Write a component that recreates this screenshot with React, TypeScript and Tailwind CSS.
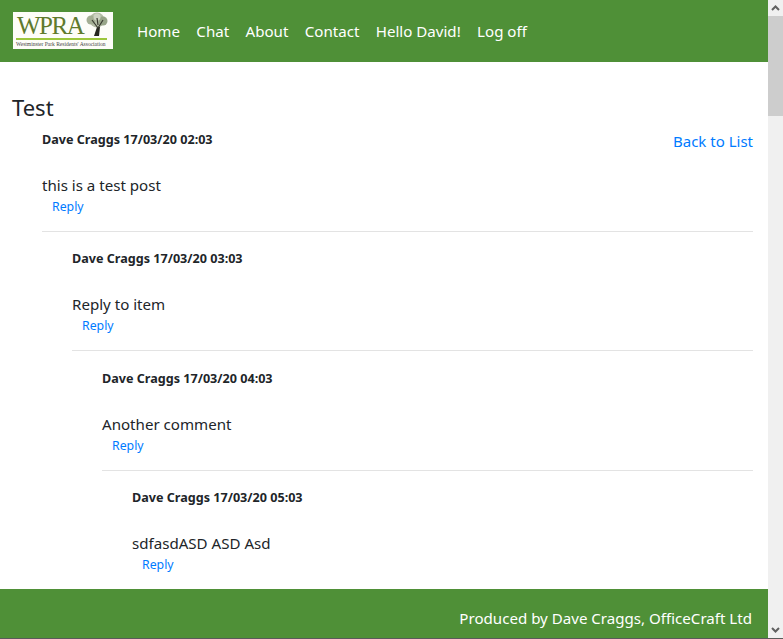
import React from 'react';

const comments = [
  { time: '02:03', text: 'this is a test post', indent: 'ml-[30px]' },
  { time: '03:03', text: 'Reply to item', indent: 'ml-[60px]' },
  { time: '04:03', text: 'Another comment', indent: 'ml-[90px]' },
  { time: '05:03', text: 'sdfasdASD ASD Asd', indent: 'ml-[120px]' },
];

function Logo() {
  return (
    <div className="relative w-[100px] h-[37px] mb-[1px] bg-[#fdfdf8] overflow-hidden">
      <span className="absolute left-[4px] top-[0px] text-[25px] leading-[27px] text-[#5f7a2c] font-['Liberation_Serif',serif] tracking-[-1.5px]">
        WPRA
      </span>
      <svg className="absolute left-[72px] top-[0px]" width="24" height="25" viewBox="0 0 24 25">
        <circle cx="12" cy="8" r="7.5" fill="#b4bda6" />
        <circle cx="6" cy="8" r="4.5" fill="#a3ae93" />
        <circle cx="18" cy="9" r="4.5" fill="#98a588" />
        <circle cx="12" cy="5" r="3.5" fill="#cdd3c2" />
        <path d="M9 24 L12 15 L15 15 L14 24 Z" fill="#26271f" />
        <path d="M13 16 L7 8 M13 16 L18 8 M13 13 L12 6" stroke="#3a3b30" strokeWidth="1.2" fill="none" />
      </svg>
      <div className="absolute left-[3px] right-[6px] top-[26px] h-[2px] bg-[#9cc63c]" />
      <span className="absolute left-[3px] top-[29px] text-[5.5px] leading-[6px] text-[#444] whitespace-nowrap font-['Liberation_Serif',serif]">
        Westminster Park Residents' Association
      </span>
    </div>
  );
}

function Comment({ time, text, indent, last }: { time: string; text: string; indent: string; last: boolean }) {
  return (
    <div className={indent}>
      <div className="text-[12.6px] leading-[18px] font-bold text-[#212529] h-[18px]">Dave Craggs 17/03/20 {time}</div>
      <div className="mt-[24px] text-[15.1px] leading-[24px] text-[#212529]">{text}</div>
      <div className="mt-[1px] pl-[10px] text-[12.3px] leading-[18px] text-[#007bff] h-[18px]">Reply</div>
      {!last && <div className="mt-[15px] mb-[18.4px] border-t border-[#e3e3e3]" />}
    </div>
  );
}

export default function App() {
  return (
    <div className="flex flex-col h-[639px] w-[783px] overflow-hidden bg-white font-['Noto_Sans','Open_Sans',sans-serif]">
      <div className="flex h-[638px] shrink-0">
        <div className="flex flex-col w-[768px] h-[638px]">
          <header className="flex items-center h-[62px] shrink-0 bg-[#4f9037] pl-[13px]">
            <Logo />
            <nav className="flex ml-[24px] gap-[16.4px] text-[15.1px] text-white">
              <span>Home</span>
              <span>Chat</span>
              <span>About</span>
              <span>Contact</span>
              <span>Hello David!</span>
              <span>Log off</span>
            </nav>
          </header>
          <main className="flex-1 overflow-hidden pl-[12px] pr-[15px]">
            <h1 className="mt-[31px] text-[22px] leading-[28px] text-[#212529]">Test</h1>
            <div className="relative pt-[10px]">
              <span className="absolute right-0 top-[8px] text-[15px] leading-[24px] text-[#007bff]">Back to List</span>
              {comments.map((c, i) => (
                <Comment key={c.time} time={c.time} text={c.text} indent={c.indent} last={i === 3} />
              ))}
            </div>
          </main>
          <footer className="flex items-center justify-end h-[49px] shrink-0 bg-[#4f9037] pr-[16px] pt-[10px] text-[15.1px] text-white">
            Produced by Dave Craggs, OfficeCraft Ltd
          </footer>
        </div>
        <div className="flex flex-col items-center w-[15px] h-[638px] bg-[#f0f0f0]">
          <svg className="mt-[4px] mb-[3px]" width="9" height="9" viewBox="0 0 9 9">
            <path d="M1 6 L4.5 2.5 L8 6" stroke="#606060" strokeWidth="2" fill="none" />
          </svg>
          <div className="w-full h-[100px] bg-[#cdcdcd]" />
          <svg className="mt-auto mb-[4px]" width="9" height="9" viewBox="0 0 9 9">
            <path d="M1 3 L4.5 6.5 L8 3" stroke="#606060" strokeWidth="2" fill="none" />
          </svg>
        </div>
      </div>
      <div className="h-[1px] bg-[#5a5a5a]" />
    </div>
  );
}
